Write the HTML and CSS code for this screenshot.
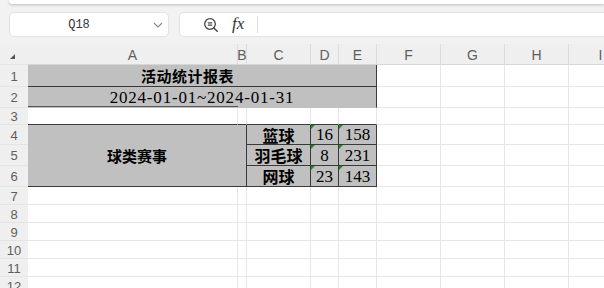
FILE: index.html
```html
<!DOCTYPE html>
<html>
<head>
<meta charset="utf-8">
<link rel="stylesheet" href="styles.css">
</head>
<body>
<div class="app">
  <div class="topstrip"></div>
  <div class="toolbar">
    <div class="namebox">
      <span class="name-text">Q18</span>
      <svg class="chev" width="10" height="6" viewBox="0 0 10 6"><path d="M1 1 L5 5 L9 1" fill="none" stroke="#888" stroke-width="1.1"/></svg>
    </div>
    <div class="formulabox">
      <svg class="zoomicon" width="16" height="16" viewBox="0 0 16 16">
        <circle cx="7" cy="7" r="5.3" fill="none" stroke="#444" stroke-width="1.3"/>
        <path d="M4.8 5.8 H9.2 M4.8 8.2 H9.2" stroke="#444" stroke-width="1.2"/>
        <path d="M10.9 10.9 L14.2 14.2" stroke="#444" stroke-width="1.4" stroke-linecap="round"/>
      </svg>
      <span class="fx">fx</span>
      <span class="sep"></span>
    </div>
  </div>
  <div class="sheet">
    <div class="hd corner"><span class="tri"></span></div>
    <div class="hd col">A</div>
    <div class="hd col">B</div>
    <div class="hd col">C</div>
    <div class="hd col">D</div>
    <div class="hd col">E</div>
    <div class="hd col">F</div>
    <div class="hd col">G</div>
    <div class="hd col">H</div>
    <div class="hd col">I</div>

    <div class="hd row">1</div>
    <div class="c fill title span5 bR bB">活动统计报表</div>
    <div class="c"></div><div class="c"></div><div class="c"></div><div class="c"></div>

    <div class="hd row">2</div>
    <div class="c fill date span5 bR bBA">2024-01-01~2024-01-31</div>
    <div class="c"></div><div class="c"></div><div class="c"></div><div class="c"></div>

    <div class="hd row">3</div>
    <div class="c bB"></div><div class="c bB"></div><div class="c bB"></div><div class="c bB"></div><div class="c bB"></div>
    <div class="c"></div><div class="c"></div><div class="c"></div><div class="c"></div>

    <div class="hd row">4</div>
    <div class="c fill cat merged bR bB">球类赛事</div>
    <div class="c fill cjk bR bB">篮球</div>
    <div class="c fill num bR bB">16</div>
    <div class="c fill num bR bB">158</div>
    <div class="c"></div><div class="c"></div><div class="c"></div><div class="c"></div>

    <div class="hd row">5</div>
    <div class="c fill cjk bR bB">羽毛球</div>
    <div class="c fill num bR bB">8</div>
    <div class="c fill num bR bB">231</div>
    <div class="c"></div><div class="c"></div><div class="c"></div><div class="c"></div>

    <div class="hd row">6</div>
    <div class="c fill cjk bR bB">网球</div>
    <div class="c fill num bR bB">23</div>
    <div class="c fill num bR bB">143</div>
    <div class="c"></div><div class="c"></div><div class="c"></div><div class="c"></div>

    <div class="hd row">7</div>
    <div class="c"></div><div class="c"></div><div class="c"></div><div class="c"></div><div class="c"></div><div class="c"></div><div class="c"></div><div class="c"></div><div class="c"></div>
    <div class="hd row">8</div>
    <div class="c"></div><div class="c"></div><div class="c"></div><div class="c"></div><div class="c"></div><div class="c"></div><div class="c"></div><div class="c"></div><div class="c"></div>
    <div class="hd row">9</div>
    <div class="c"></div><div class="c"></div><div class="c"></div><div class="c"></div><div class="c"></div><div class="c"></div><div class="c"></div><div class="c"></div><div class="c"></div>
    <div class="hd row">10</div>
    <div class="c"></div><div class="c"></div><div class="c"></div><div class="c"></div><div class="c"></div><div class="c"></div><div class="c"></div><div class="c"></div><div class="c"></div>
    <div class="hd row">11</div>
    <div class="c"></div><div class="c"></div><div class="c"></div><div class="c"></div><div class="c"></div><div class="c"></div><div class="c"></div><div class="c"></div><div class="c"></div>
    <div class="hd row">12</div>
    <div class="c"></div><div class="c"></div><div class="c"></div><div class="c"></div><div class="c"></div><div class="c"></div><div class="c"></div><div class="c"></div><div class="c"></div>
  </div>
</div>
</body>
</html>
```

FILE: styles.css
```css
* { box-sizing: border-box; }
html, body { margin: 0; padding: 0; }
body {
  width: 604px;
  height: 288px;
  overflow: hidden;
  background: #f2f2f2;
  font-family: "Liberation Sans", Arial, sans-serif;
}
.app { width: 604px; height: 288px; overflow: hidden; }
.topstrip {
  height: 4px;
  margin-left: 9px;
  background: #ffffff;
  border-radius: 0 0 0 6px;
  box-shadow: 0 1px 3px rgba(0,0,0,0.22);
}
.toolbar {
  display: flex;
  gap: 10px;
  padding: 8px 0 0 9px;
  height: 40px;
}
.namebox {
  width: 160px;
  height: 25px;
  background: #fff;
  border: 1px solid #e2e2e2;
  border-radius: 5px;
  display: flex;
  align-items: center;
  padding-right: 5px;
}
.name-text {
  flex: 1;
  text-align: center;
  font-family: "Liberation Mono", "DejaVu Sans Mono", monospace;
  font-size: 12px;
  color: #333;
  padding-right: 5px;
}
.chev { display: block; }
.formulabox {
  flex: 1;
  height: 25px;
  background: #fff;
  border: 1px solid #e2e2e2;
  border-right: none;
  border-radius: 5px 0 0 5px;
  display: flex;
  align-items: center;
  padding-left: 23px;
}
.zoomicon { display: block; }
.fx {
  margin-left: 13px;
  font-family: "Liberation Serif", "Times New Roman", serif;
  font-style: italic;
  font-size: 17px;
  color: #333;
  line-height: 1;
  margin-top: -2px;
}
.sep {
  width: 1px;
  height: 17px;
  background: #dedede;
  margin-left: 13px;
}
.sheet {
  display: grid;
  grid-template-columns: 28px 210px 9px 64px 28px 38px 64px 64px 64px 64px;
  grid-template-rows: 21px 22px 21px 17px 20px 21px 21px repeat(6, 18px);
  width: 604px;
  background: #fff;
}
.hd {
  background: #efefef;
  color: #5e5e5e;
  display: flex;
  align-items: center;
  justify-content: center;
  border-right: 1px solid #dcdcdc;
  border-bottom: 1px solid #e4e4e4;
  line-height: 1;
}
.hd.col { font-size: 14px; padding-top: 1px; border-bottom-color: #d6d6d6; }
.hd.row { font-size: 13px; border-right: none; padding-top: 1px; }
.corner { position: relative; border-right: none; }
.tri {
  position: absolute;
  left: 10px;
  top: 10px;
  width: 0; height: 0;
  border-left: 5px solid transparent;
  border-bottom: 5px solid #555;
}
.c {
  border-right: 1px solid #e6e6e6;
  border-bottom: 1px solid #e6e6e6;
  display: flex;
  align-items: center;
  justify-content: center;
  color: #000;
  white-space: nowrap;
  position: relative;
  line-height: 1;
}
.fill { background: #c0c0c0; }
.span5 { grid-column: span 5; }
.merged { grid-column: span 2; grid-row: span 3; }
.bR { border-right-color: #3a3a3a; }
.bB { border-bottom-color: #3a3a3a; }
.bBA {
  border-bottom-color: #c0c0c0;
  background: linear-gradient(#555, #555) left bottom / 210px 1px no-repeat, #c0c0c0;
}
.title {
  font-family: "Noto Sans CJK SC", sans-serif;
  font-weight: 700;
  font-size: 15px;
  letter-spacing: 0.5px;
  padding-right: 29px;
}
.date {
  font-family: "Liberation Serif", "Times New Roman", serif;
  font-size: 17px;
  letter-spacing: 0.8px;
}
.cat {
  font-family: "Noto Sans CJK SC", sans-serif;
  font-weight: 700;
  font-size: 15px;
}
.cjk {
  font-family: "Noto Sans CJK SC", sans-serif;
  font-weight: 700;
  font-size: 16px;
}
.num {
  font-family: "Liberation Serif", "Times New Roman", serif;
  font-size: 17px;
}
.num::before {
  content: "";
  position: absolute;
  left: 0;
  top: 0;
  width: 0; height: 0;
  border-top: 4px solid #1f8a2a;
  border-right: 4px solid transparent;
}
```
